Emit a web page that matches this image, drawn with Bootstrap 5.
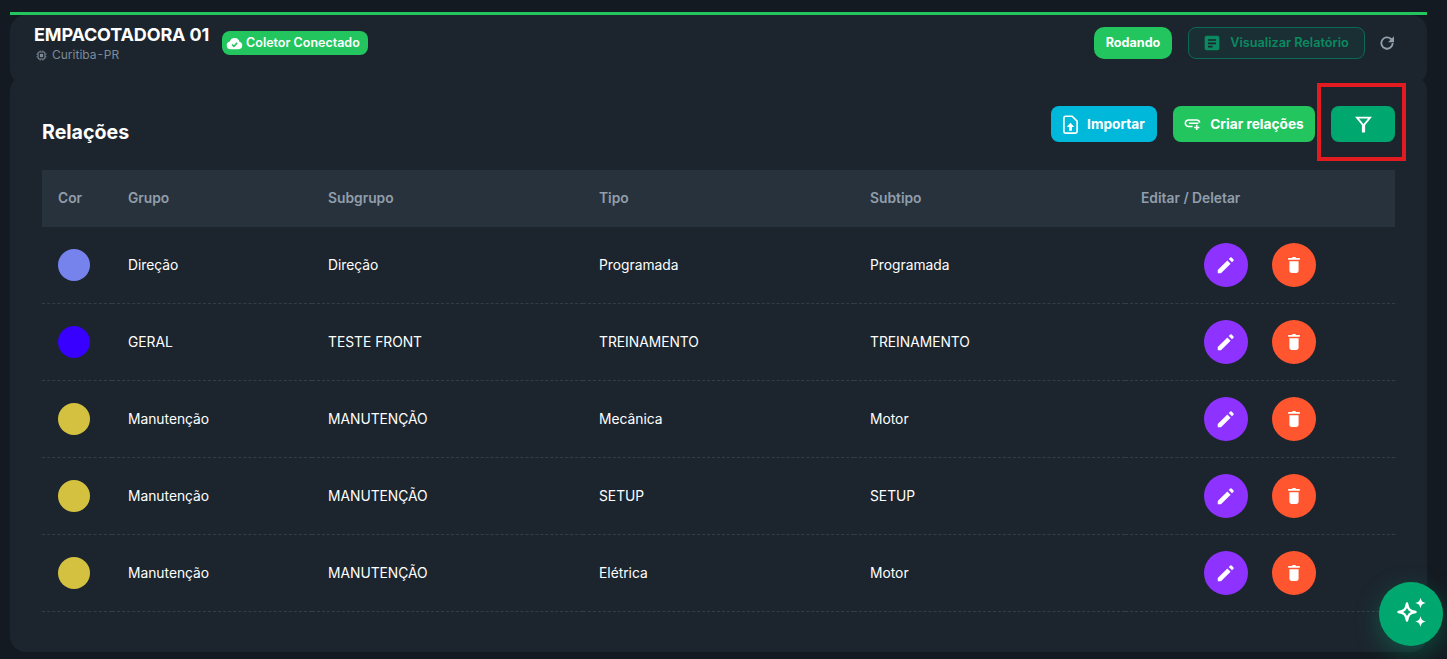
<!DOCTYPE html>
<html lang="pt-BR">
<head>
<meta charset="utf-8">
<title>Relações</title>
<link href="https://cdn.jsdelivr.net/npm/bootstrap@5.3.0/dist/css/bootstrap.min.css" rel="stylesheet">
<style>
html,body{height:659px;overflow:hidden}
body{background:#141a21;font-family:"Inter","Liberation Sans",sans-serif;color:#fff;padding:12px 20px 7px 10px;position:relative}
.top-line{height:3px;background:#22c55e}
.head-panel{background:#1c252e;border-radius:16px;height:70px;padding:8px 32px 0 24px;display:flex;justify-content:space-between}
.head-title{font-size:18px;font-weight:700;line-height:24px;letter-spacing:-.15px}
.head-sub{font-size:12px;color:#7d8a97;line-height:16px;gap:5px;padding-left:2px;word-spacing:-2.5px}
.pill-ok{background:#22c55e;color:#fff;font-size:12.5px;font-weight:600;border-radius:8px;height:24px;width:146px;padding:0 0 0 4px;margin:8px 0 0 13px;gap:3px}
.state-chip{background:#22c55e;font-size:12.6px;font-weight:700;border-radius:10px;height:32px;width:78px;justify-content:center;display:flex;align-items:center}
.report-btn{border:1px solid #0b6b52;background:rgba(0,167,111,.08);color:#0b8a62;font-size:12.7px;font-weight:600;border-radius:8px;height:32px;width:177px;gap:10px;margin-left:16px}
.refresh-wrap{height:32px;margin-left:14px}
.main-panel{background:#1c252e;border-radius:16px;height:577px;margin-top:-10px;padding:31px 32px 0;position:relative}
.tool-row{height:36px}
.panel-title{font-size:19.600px;font-weight:700;margin:0;padding-top:15px}
.act{height:36px;border:0;border-radius:8px;color:#fff;font-size:13.700px;font-weight:700;display:flex;align-items:center;justify-content:center}
.act-import{background:#00b8d9;width:106px;gap:9px}
.act-create{background:#22c55e;width:142px;gap:9px;margin-left:16px}
.act-filter{background:#00a76f;width:64px;margin-left:16px}
.rel-table{margin:28px 0 0;width:1353px;table-layout:fixed;--bs-table-bg:transparent;--bs-table-color:#fff;border-collapse:separate;border-spacing:0}
.rel-table th{background:#28323d;color:#919eab;font-size:13.800px;font-weight:600;height:57px;padding:0 16px;vertical-align:middle;border:0}
.rel-table td{font-size:13.800px;font-weight:400;height:77px;padding:0 16px;vertical-align:middle;border-bottom:1px dashed rgba(145,158,171,.2)}
.swatch{width:32px;height:32px;border-radius:50%;display:block}
.round-btn{width:44px;height:44px;border-radius:50%;border:0;padding:0;display:flex;align-items:center;justify-content:center}
.round-edit{background:#8e33ff}
.round-del{background:#ff5630}
.tool-cell{gap:24px;padding-left:63px}
.callout{position:absolute;left:1317px;top:83px;width:89px;height:78px;border:4px solid #e11b1f;pointer-events:none}
.fab{position:absolute;left:1379px;top:582px;width:64px;height:64px;border-radius:50%;background:#00a76f;box-shadow:0 8px 24px rgba(0,167,111,.35);display:flex;align-items:center;justify-content:center;border:0;padding:0}
</style>
</head>
<body>
<div class="top-line"></div>
<header class="head-panel">
  <div class="d-flex">
    <div>
      <div class="head-title">EMPACOTADORA 01</div>
      <div class="head-sub d-flex align-items-center">
        <svg width="11" height="11" viewBox="0 0 24 24" fill="none" stroke="#7d8a97" stroke-width="2.400"><rect x="4.500" y="4.500" width="15" height="15" rx="3"/><rect x="8.500" y="8.500" width="7" height="7" fill="#7d8a97" stroke="none"/><path stroke-width="2" d="M9 1v3M15 1v3M9 20v3M15 20v3M1 9h3M1 15h3M20 9h3M20 15h3"/></svg>
        <span>Curitiba - PR</span>
      </div>
    </div>
    <div class="pill-ok d-flex align-items-center">
      <svg width="17" height="17" viewBox="0 0 24 24"><path fill="#fff" d="M6.500 20a5.500 5.500 0 0 1-1-10.900A7 7 0 0 1 19 9.600 5.300 5.300 0 0 1 18 20z"/><path fill="none" stroke="#22c55e" stroke-width="2.200" d="M8.500 13.500l2.600 2.600 4.600-5"/></svg>
      <span>Coletor Conectado</span>
    </div>
  </div>
  <div class="d-flex align-items-start pt-1">
    <div class="state-chip">Rodando</div>
    <div class="report-btn d-flex align-items-center justify-content-center">
      <svg width="16" height="16" viewBox="0 0 24 24"><rect x="1" y="1" width="22" height="22" rx="3" fill="#0b8a62"/><path stroke="#1c252e" stroke-width="2.400" d="M6 7.500h12M6 12.500h12M6 17.500h7"/></svg>
      <span>Visualizar Relatório</span>
    </div>
    <div class="refresh-wrap d-flex align-items-center">
      <svg width="16" height="16" viewBox="0 0 24 24" fill="none" stroke="#919eab" stroke-width="2.800"><path d="M20.500 12a8.500 8.500 0 1 1-2.800-6.300L20 8"/><path fill="#919eab" stroke="none" d="M22.500 2v9h-9z"/></svg>
    </div>
  </div>
</header>
<main class="main-panel">
  <div class="tool-row d-flex justify-content-between align-items-start">
    <h2 class="panel-title">Relações</h2>
    <div class="d-flex">
      <button class="act act-import" type="button">
        <svg width="15" height="19" viewBox="0 0 18 23" fill="none" stroke="#fff" stroke-width="2"><path d="M3 1.500h8l6 6V20a2 2 0 0 1-2 2H3a2 2 0 0 1-2-2V3.500a2 2 0 0 1 2-2z"/><path fill="#fff" stroke="none" d="M9 9.500l4.500 5H10.700V19H7.300v-4.500H4.500z"/></svg>
        <span>Importar</span>
      </button>
      <button class="act act-create" type="button">
        <svg width="17" height="13" viewBox="0 0 26 19" fill="none" stroke="#fff" stroke-width="2.400"><path d="M17 2.500H7a5 5 0 0 0 0 10h6M7.500 7.500H22M17 2.500h2a5 5 0 0 1 5 4"/><path d="M19.500 10v8M15.500 14h8"/></svg>
        <span>Criar relações</span>
      </button>
      <button class="act act-filter" type="button" aria-label="Filtrar">
        <svg width="17" height="17" viewBox="0 0 16 16" fill="none"><path d="M1.800 1.500h12.400L8 9z" stroke="#fff" stroke-width="1.800"/><rect x="6.500" y="7.500" width="3" height="8" fill="#fff"/></svg>
      </button>
    </div>
  </div>
  <table class="table rel-table">
    <colgroup><col style="width:70px"><col style="width:200px"><col style="width:271px"><col style="width:271px"><col style="width:271px"><col style="width:270px"></colgroup>
    <thead><tr><th>Cor</th><th>Grupo</th><th>Subgrupo</th><th>Tipo</th><th>Subtipo</th><th>Editar / Deletar</th></tr></thead>
    <tbody id="rows"></tbody>
  </table>
</main>
<div class="callout"></div>
<button class="fab" type="button" aria-label="Assistente">
  <svg width="32" height="32" viewBox="0 0 32 32" fill="none"><path d="M12 5.500c1 5.800 2.700 7.500 8.500 8.500-5.800 1-7.500 2.700-8.500 8.500-1-5.800-2.700-7.500-8.500-8.500 5.800-1 7.500-2.700 8.500-8.500z" stroke="#fff" stroke-width="2.400" stroke-linejoin="round"/><path fill="#fff" d="M25.500-.5c.8 3.700 1.800 4.700 5.500 5.500-3.700.8-4.700 1.800-5.500 5.500-.8-3.700-1.800-4.700-5.500-5.500 3.700-.8 4.700-1.800 5.500-5.500zM25.500 18c.8 3.700 1.800 4.700 5.500 5.500-3.700.8-4.700 1.800-5.500 5.500-.8-3.700-1.800-4.700-5.500-5.500 3.700-.8 4.700-1.800 5.500-5.500z"/></svg>
</button>
<script>
const data=[
["#7783ec","Direção","Direção","Programada","Programada"],
["#3700ff","GERAL","TESTE FRONT","TREINAMENTO","TREINAMENTO"],
["#d4c13f","Manutenção","MANUTENÇÃO","Mecânica","Motor"],
["#d4c13f","Manutenção","MANUTENÇÃO","SETUP","SETUP"],
["#d4c13f","Manutenção","MANUTENÇÃO","Elétrica","Motor"]];
const pen='<svg width="22" height="22" viewBox="0 0 24 24" fill="#fff"><path d="M3 17.500V21h3.500L17 10.500 13.500 7zM20.200 7.300a1 1 0 0 0 0-1.400l-2.100-2.100a1 1 0 0 0-1.400 0L15 5.500l3.500 3.500z"/></svg>';
const bin='<svg width="20" height="20" viewBox="0 0 24 24" fill="#fff"><path d="M5 3.500h4.500L10.500 2.500h3l1 1H19v2.300H5zM6.500 7.500h11V19a2.500 2.500 0 0 1-2.500 2.500H9A2.500 2.500 0 0 1 6.500 19z"/></svg>';
document.getElementById('rows').innerHTML=data.map(r=>`<tr><td><span class="swatch" style="background:${r[0]}"></span></td><td>${r[1]}</td><td>${r[2]}</td><td>${r[3]}</td><td>${r[4]}</td><td><div class="d-flex tool-cell"><button class="round-btn round-edit" type="button" aria-label="Editar">${pen}</button><button class="round-btn round-del" type="button" aria-label="Deletar">${bin}</button></div></td></tr>`).join('');
</script>
<script src="https://cdn.jsdelivr.net/npm/bootstrap@5.3.0/dist/js/bootstrap.bundle.min.js"></script>
</body>
</html>
